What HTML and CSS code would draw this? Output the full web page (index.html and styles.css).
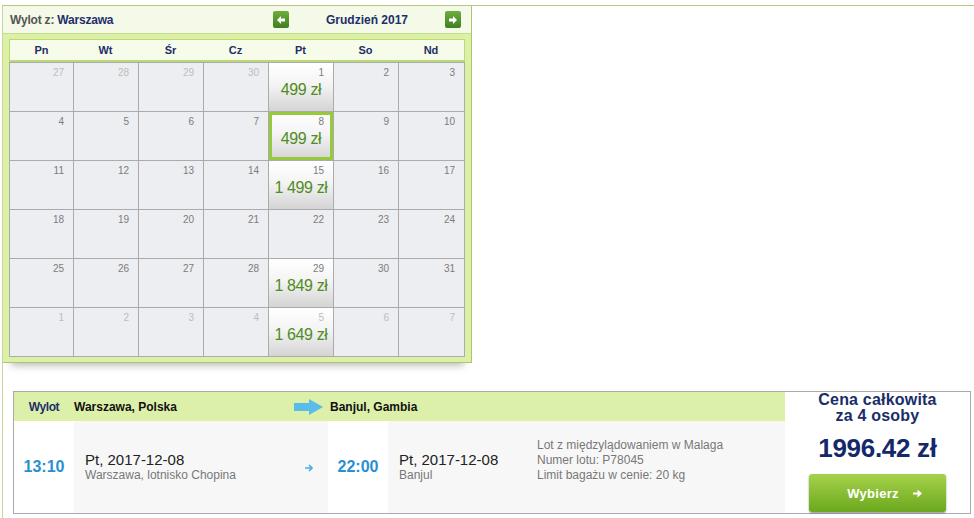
FILE: index.html
```html
<!DOCTYPE html>
<html>
	<head>
		<meta charset="utf-8">
		<link rel="stylesheet" href="styles.css">
	</head>
	<body><div class="frame">

		<div class="calendar">
			<div class="calHead">
				<div class="from">Wylot z: <b>Warszawa</b></div>
				<div class="monthNav">
					<span class="navBtn"><svg width="8" height="8" viewBox="0 0 8 8"><path d="M0 4 L4 0 V2.5 H8 V5.5 H4 V8 Z" fill="#fff"/></svg></span>
					<span class="month">Grudzień 2017</span>
					<span class="navBtn"><svg width="8" height="8" viewBox="0 0 8 8"><path d="M8 4 L4 0 V2.5 H0 V5.5 H4 V8 Z" fill="#fff"/></svg></span>
				</div>
			</div>
			<div class="calBody">
				<div class="dow">
					<span>Pn</span><span>Wt</span><span>Śr</span><span>Cz</span><span>Pt</span><span>So</span><span>Nd</span>
				</div>
				<div class="days">
					<div class="day off"><span class="num">27</span></div>
					<div class="day off"><span class="num">28</span></div>
					<div class="day off"><span class="num">29</span></div>
					<div class="day off"><span class="num">30</span></div>
					<div class="day priced"><span class="num">1</span><span class="price">499 zł</span></div>
					<div class="day"><span class="num">2</span></div>
					<div class="day"><span class="num">3</span></div>

					<div class="day"><span class="num">4</span></div>
					<div class="day"><span class="num">5</span></div>
					<div class="day"><span class="num">6</span></div>
					<div class="day"><span class="num">7</span></div>
					<div class="day priced selected"><span class="num">8</span><span class="price">499 zł</span></div>
					<div class="day"><span class="num">9</span></div>
					<div class="day"><span class="num">10</span></div>

					<div class="day"><span class="num">11</span></div>
					<div class="day"><span class="num">12</span></div>
					<div class="day"><span class="num">13</span></div>
					<div class="day"><span class="num">14</span></div>
					<div class="day priced"><span class="num">15</span><span class="price">1 499 zł</span></div>
					<div class="day"><span class="num">16</span></div>
					<div class="day"><span class="num">17</span></div>

					<div class="day"><span class="num">18</span></div>
					<div class="day"><span class="num">19</span></div>
					<div class="day"><span class="num">20</span></div>
					<div class="day"><span class="num">21</span></div>
					<div class="day"><span class="num">22</span></div>
					<div class="day"><span class="num">23</span></div>
					<div class="day"><span class="num">24</span></div>

					<div class="day"><span class="num">25</span></div>
					<div class="day"><span class="num">26</span></div>
					<div class="day"><span class="num">27</span></div>
					<div class="day"><span class="num">28</span></div>
					<div class="day priced"><span class="num">29</span><span class="price">1 849 zł</span></div>
					<div class="day"><span class="num">30</span></div>
					<div class="day"><span class="num">31</span></div>

					<div class="day off"><span class="num">1</span></div>
					<div class="day off"><span class="num">2</span></div>
					<div class="day off"><span class="num">3</span></div>
					<div class="day off"><span class="num">4</span></div>
					<div class="day priced off"><span class="num">5</span><span class="price">1 649 zł</span></div>
					<div class="day off"><span class="num">6</span></div>
					<div class="day off"><span class="num">7</span></div>
				</div>
			</div>
		</div>

		<div class="flight">
			<div class="hd label">Wylot</div>
			<div class="hd origin">
				<span>Warszawa, Polska</span>
				<svg width="29" height="16" viewBox="0 0 29 16"><path d="M0 4 H15 V0 L29 8 L15 16 V12 H0 Z" fill="#5bbbe9"/></svg>
			</div>
			<div class="hd dest">Banjul, Gambia</div>

			<div class="total">
				<div class="totalLabel">Cena całkowita<br>za 4 osoby</div>
				<div class="totalPrice">1996.42 zł</div>
				<button class="choose">Wybierz
					<svg width="9" height="9" viewBox="0 0 9 9"><path d="M0 3.4 H4.5 V0.5 L9 4.5 L4.5 8.5 V5.6 H0 Z" fill="#fff"/></svg>
				</button>
			</div>

			<div class="time">13:10</div>
			<div class="place">
				<div>
					<div class="date">Pt, 2017-12-08</div>
					<div class="where">Warszawa, lotnisko Chopina</div>
				</div>
				<svg class="small" width="8" height="8" viewBox="0 0 8 8"><path d="M0 4 H7 M4 1 L7 4 L4 7" stroke="#4aaee6" stroke-width="1.6" fill="none"/></svg>
			</div>
			<div class="time">22:00</div>
			<div class="place arrive">
				<div class="arriveDate">
					<div class="date">Pt, 2017-12-08</div>
					<div class="where">Banjul</div>
				</div>
				<div class="info">
					Lot z międzylądowaniem w Malaga<br>
					Numer lotu: P78045<br>
					Limit bagażu w cenie: 20 kg
				</div>
			</div>
		</div>

	</div></body>
</html>
```

FILE: styles.css
```css
body {
	margin: 0;
	font-family: "Liberation Sans", Arial, sans-serif;
	background: #fff;
	overflow: hidden;
}
.frame {
	margin: 5px 0 0 2px;
	border-top: 1px solid #b6c97e;
	border-left: 1px solid #c6d69c;
	height: 520px;
}

/* calendar */
.calendar {
	width: 468px;
	border-right: 1px solid #adc66e;
	border-bottom: 1px solid #adc66e;
	background: #dcf0a6;
	box-shadow: 0 10px 8px -8px rgba(0, 0, 0, 0.3);
}
.calHead {
	display: flex;
	align-items: center;
	justify-content: space-between;
	height: 27px;
	padding: 0 10px 0 7px;
	background: #f4f9e8;
	border-bottom: 1px solid #c8dd8e;
}
.from {
	font-size: 12px;
	font-weight: bold;
	color: #555;
	letter-spacing: -0.2px;
}
.from b {
	color: #1d2f6b;
}
.monthNav {
	display: flex;
	align-items: center;
	width: 188px;
}
.month {
	flex: 1;
	text-align: center;
	font-size: 12px;
	font-weight: bold;
	color: #1d2f6b;
}
.navBtn {
	display: flex;
	align-items: center;
	justify-content: center;
	width: 16px;
	height: 17px;
	border-radius: 2px;
	background: linear-gradient(#6fae3c, #3f7e22);
}
.calBody {
	padding: 5px 6px;
}
.dow {
	display: grid;
	grid-template-columns: 63px repeat(5, 65px) 66px;
	height: 20px;
	line-height: 20px;
	background: #f6fbea;
	border: 1px solid #bcd977;
	border-bottom-width: 2px;
}
.dow span {
	text-align: center;
	font-size: 11px;
	font-weight: bold;
	color: #1d2f6b;
}
.days {
	display: grid;
	grid-template-columns: 63px repeat(5, 64px) 65px;
	grid-auto-rows: 48px;
	gap: 1px;
	background: #ababab;
	border: 1px solid #ababab;
}
.day {
	display: flex;
	flex-direction: column;
	align-items: flex-end;
	padding: 4px 9px 0 0;
	background: #eceef2;
}
.num {
	font-size: 10px;
	color: #7c7c7c;
}
.off .num {
	color: #bdbdbd;
}
.priced {
	background: linear-gradient(#fff, #f4f4f4 45%, #d4d4d4);
}
.price {
	align-self: stretch;
	margin: 3px -9px 0 0;
	text-align: center;
	white-space: nowrap;
	font-size: 16px;
	color: #4f8c22;
	letter-spacing: -0.4px;
}
.selected {
	box-shadow: inset 0 0 0 3px #96c93c;
}

/* flight row */
.flight {
	display: grid;
	grid-template-columns: 60px 254px 60px 397px 1fr;
	grid-template-rows: 29px 92px;
	margin: 28px 3px 0 10px;
	border: 1px solid #aaa;
}
.hd {
	display: flex;
	align-items: center;
	background: #dcf0a9;
	font-size: 12px;
	font-weight: bold;
	color: #111;
}
.hd.label {
	justify-content: center;
	color: #1d2f6b;
	letter-spacing: -0.4px;
}
.hd.origin {
	justify-content: space-between;
	padding-right: 5px;
}
.hd.dest {
	grid-column: 3 / 5;
	padding-left: 2px;
}
.total {
	grid-column: 5;
	grid-row: 1 / 3;
	display: flex;
	flex-direction: column;
	align-items: center;
	background: #fff;
	color: #1a2d6a;
}
.totalLabel {
	text-align: center;
	font-size: 16px;
	font-weight: bold;
	line-height: 16px;
	letter-spacing: 0.2px;
}
.totalPrice {
	margin-top: 9px;
	font-size: 26px;
	font-weight: bold;
	line-height: 30px;
	letter-spacing: -0.3px;
	color: #14286a;
}
.choose {
	display: flex;
	align-items: center;
	justify-content: center;
	gap: 14px;
	margin-top: 11px;
	width: 137px;
	height: 38px;
	padding: 0 0 0 14px;
	border: none;
	border-radius: 3px;
	background: linear-gradient(#a6d24a, #6ba81e);
	box-shadow: 0 1px 2px rgba(0, 0, 0, 0.45);
	font-family: inherit;
	font-size: 13px;
	font-weight: bold;
	color: #fff;
	letter-spacing: 0.3px;
}
.time {
	display: flex;
	align-items: center;
	justify-content: center;
	font-size: 16px;
	font-weight: bold;
	color: #2a8fd0;
}
.place {
	display: flex;
	align-items: center;
	justify-content: space-between;
	padding: 0 15px 0 11px;
	background: #f7f7f7;
}
.date {
	font-size: 15px;
	color: #222;
	line-height: 17px;
}
.where {
	font-size: 12px;
	color: #777;
	line-height: 15px;
}
.small {
	margin-top: 2px;
}
.place.arrive {
	justify-content: flex-start;
	padding-right: 0;
}
.arriveDate {
	width: 138px;
}
.info {
	margin-top: -14px;
	font-size: 12px;
	line-height: 15px;
	color: #777;
}
```
